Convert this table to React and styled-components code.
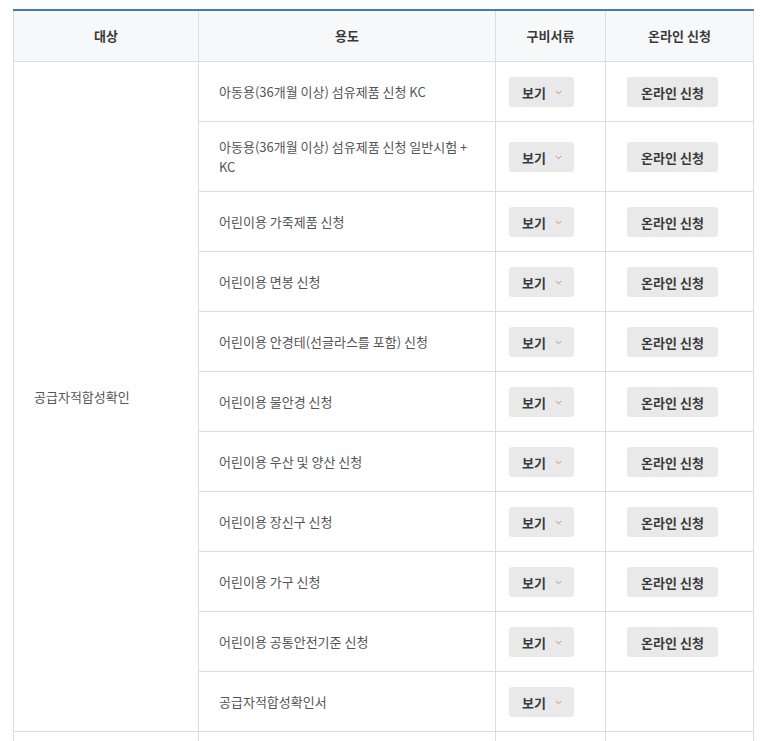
import React from "react";
import styled, { createGlobalStyle } from "styled-components";

const Global = createGlobalStyle`
  html, body { margin: 0; padding: 0; background: #fff; }
  body { font-family: "Noto Sans CJK KR", "Noto Sans", sans-serif; }
`;

const Wrap = styled.div`
  padding: 9px 0 0 13px;
`;

const Table = styled.table`
  width: 740px;
  table-layout: fixed;
  border-collapse: collapse;
  border-top: 2px solid #3b7dbd;
  border-left: 1px solid #dddddd;
  border-right: 1px solid #dddddd;
  font-size: 13px;
  color: #555;
`;

const Th = styled.th`
  background: #f7f8fa;
  border: 1px solid #dddddd;
  border-top: 0;
  padding: 15px 10px 15px;
  line-height: 20px;
  font-size: 13px;
  font-weight: 700;
  color: #3a3a3a;
  text-align: center;
`;

const Td = styled.td`
  border: 1px solid #dddddd;
  padding: 15px 20px 14px ${(p) => p.$left || "20px"};
  line-height: 20px;
  text-align: left;
  vertical-align: middle;
  color: #555;
  font-size: 13px;
  word-break: keep-all;
`;

const Btn = styled.button`
  display: inline-flex;
  align-items: center;
  justify-content: ${(p) => (p.$wide ? "center" : "flex-start")};
  gap: 9px;
  width: ${(p) => (p.$wide ? "91px" : "65px")};
  height: 30px;
  padding: 0 0 0 ${(p) => (p.$wide ? "0" : "13px")};
  border: 0;
  border-radius: 3px;
  background: #e9e9e9;
  font-family: inherit;
  font-size: 13px;
  font-weight: 700;
  color: #3a3a3a;
  cursor: pointer;
  vertical-align: middle;
`;

const Chevron = () => (
  <svg width="7" height="5" viewBox="0 0 7 5" aria-hidden="true">
    <path d="M0.8 1 L3.5 3.7 L6.2 1" fill="none" stroke="#999" strokeWidth="1" />
  </svg>
);

const rows = [
  { name: "아동용(36개월 이상) 섬유제품 신청 KC", online: true },
  { name: "아동용(36개월 이상) 섬유제품 신청 일반시험 + KC", online: true },
  { name: "어린이용 가죽제품 신청", online: true },
  { name: "어린이용 면봉 신청", online: true },
  { name: "어린이용 안경테(선글라스를 포함) 신청", online: true },
  { name: "어린이용 물안경 신청", online: true },
  { name: "어린이용 우산 및 양산 신청", online: true },
  { name: "어린이용 장신구 신청", online: true },
  { name: "어린이용 가구 신청", online: true },
  { name: "어린이용 공통안전기준 신청", online: true },
  { name: "공급자적합성확인서", online: false },
];

const rows2 = [
  { name: "어린이용 섬유제품 신청", online: true },
  { name: "어린이용 완구 신청", online: true },
];

function Group({ title, items }) {
  return items.map((r, i) => (
    <tr key={r.name}>
      {i === 0 && <Td rowSpan={items.length}>{title}</Td>}
      <Td>{r.name}</Td>
      <Td $left="13px">
        <Btn>
          보기 <Chevron />
        </Btn>
      </Td>
      <Td $left="21px">{r.online && <Btn $wide>온라인 신청</Btn>}</Td>
    </tr>
  ));
}

export default function App() {
  return (
    <>
      <Global />
      <Wrap>
        <Table>
          <colgroup>
            <col style={{ width: 185 }} />
            <col style={{ width: 297 }} />
            <col style={{ width: 110 }} />
            <col style={{ width: 148 }} />
          </colgroup>
          <thead>
            <tr>
              <Th>대상</Th>
              <Th>용도</Th>
              <Th>구비서류</Th>
              <Th>온라인 신청</Th>
            </tr>
          </thead>
          <tbody>
            <Group title="공급자적합성확인" items={rows} />
            <Group title="안전확인" items={rows2} />
          </tbody>
        </Table>
      </Wrap>
    </>
  );
}
